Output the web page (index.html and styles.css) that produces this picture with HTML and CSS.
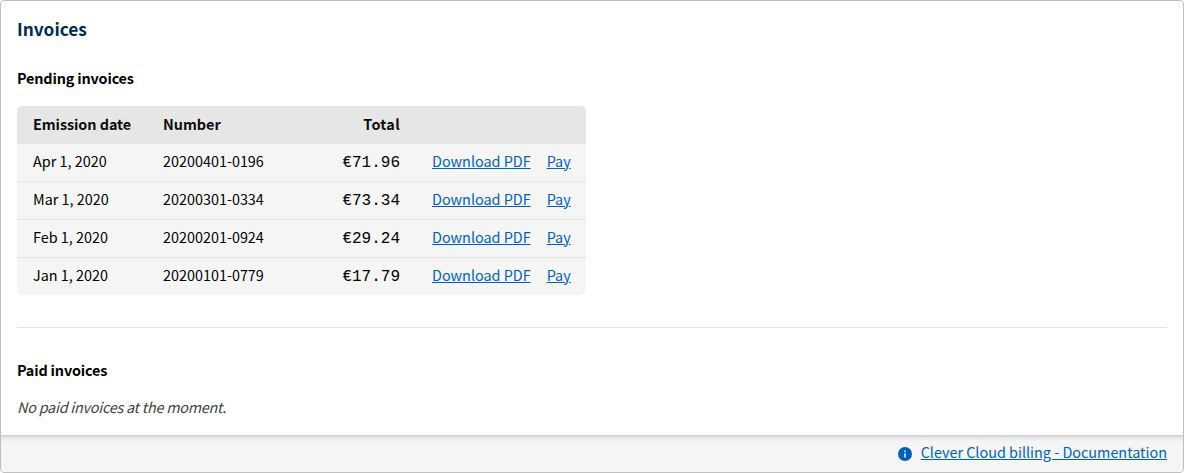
FILE: index.html
```html
<!DOCTYPE html>
<html lang="en">
<head>
<meta charset="utf-8">
<title>Invoices</title>
<link rel="stylesheet" href="styles.css">
</head>
<body>
<section class="block">
  <div class="content">
    <h1 class="title">Invoices</h1>
    <section class="pending">
      <h2 class="subtitle">Pending invoices</h2>
      <table class="invoices">
        <thead>
          <tr><th class="date">Emission date</th><th class="num">Number</th><th class="total">Total</th><th class="links"></th></tr>
        </thead>
        <tbody>
          <tr><td>Apr 1, 2020</td><td>20200401-0196</td><td class="total"><code>€71.96</code></td><td class="links"><a href="#">Download PDF</a><a href="#">Pay</a></td></tr>
          <tr><td>Mar 1, 2020</td><td>20200301-0334</td><td class="total"><code>€73.34</code></td><td class="links"><a href="#">Download PDF</a><a href="#">Pay</a></td></tr>
          <tr><td>Feb 1, 2020</td><td>20200201-0924</td><td class="total"><code>€29.24</code></td><td class="links"><a href="#">Download PDF</a><a href="#">Pay</a></td></tr>
          <tr><td>Jan 1, 2020</td><td>20200101-0779</td><td class="total"><code>€17.79</code></td><td class="links"><a href="#">Download PDF</a><a href="#">Pay</a></td></tr>
        </tbody>
      </table>
    </section>
    <section class="paid">
      <h2 class="subtitle">Paid invoices</h2>
      <p class="empty">No paid invoices at the moment.</p>
    </section>
  </div>
  <footer class="footer">
    <a class="doc" href="#"><svg class="icon" viewBox="0 0 16 16" aria-hidden="true"><circle cx="8" cy="8" r="8" fill="currentColor"/><path d="M7.2 7h1.6v5H7.2zM7.2 4h1.6v1.6H7.2z" fill="#fff"/></svg><span class="label">Clever Cloud billing - Documentation</span></a>
  </footer>
</section>
</body>
</html>
```

FILE: styles.css
```css
* { box-sizing: border-box; }
body { margin: 0; font: 14.4px/24px "Noto Sans CJK SC", sans-serif; color: #000; }
.block { height: 473px; display: flex; flex-direction: column; border: 1px solid #bfbfbf; border-radius: 4px; background: #fff; overflow: hidden; }
.content { flex: 1; padding: 16px; }
.title { margin: 0; font-size: 17.3px; line-height: 24px; font-weight: 700; color: #002c54; }
.subtitle { margin: 0; font-size: 14.4px; line-height: 24px; font-weight: 700; letter-spacing: -0.16px; }
.pending { padding: 25px 0 32px; border-bottom: 1px solid #e5e5e5; }
.pending .subtitle { margin-bottom: 16px; }
.invoices { width: 569px; table-layout: fixed; border-collapse: separate; border-spacing: 0; border-radius: 5px; overflow: hidden; background: #f5f5f5; }
.invoices th, .invoices td { height: 38px; padding: 0 16px 2px; text-align: left; white-space: nowrap; }
.invoices td { padding-bottom: 4px; }
.invoices tr + tr td { border-top: 1px solid #e5e5e5; }
.invoices tbody tr:first-child td { height: 37px; }
.invoices th { background: #e6e6e6; color: #0d0d0d; }
.invoices .date { width: 130px; letter-spacing: -0.06px; }
.invoices .num { width: 133px; }
.invoices .total { width: 136px; text-align: right; }
.invoices th.total { letter-spacing: 0.3px; }
.total code { font: 16px "Liberation Mono", monospace; }
.links a + a { margin-left: 16px; }
a { color: #0061bd; text-decoration: underline; }
.paid { padding-top: 30px; }
.empty { margin: 13px 0 0; font-style: italic; letter-spacing: -0.24px; color: #404040; }
.footer { height: 37px; padding: 0 16px; display: flex; align-items: center; justify-content: flex-end; background: #f5f5f5; box-shadow: inset 0 6px 6px -6px #a4a4a4; }
.doc { display: flex; align-items: center; gap: 9px; text-decoration: none; }
.icon { width: 14px; height: 14px; }
.label { margin-bottom: 4px; text-decoration: underline; }
.doc .icon { margin-bottom: 0; }
```
